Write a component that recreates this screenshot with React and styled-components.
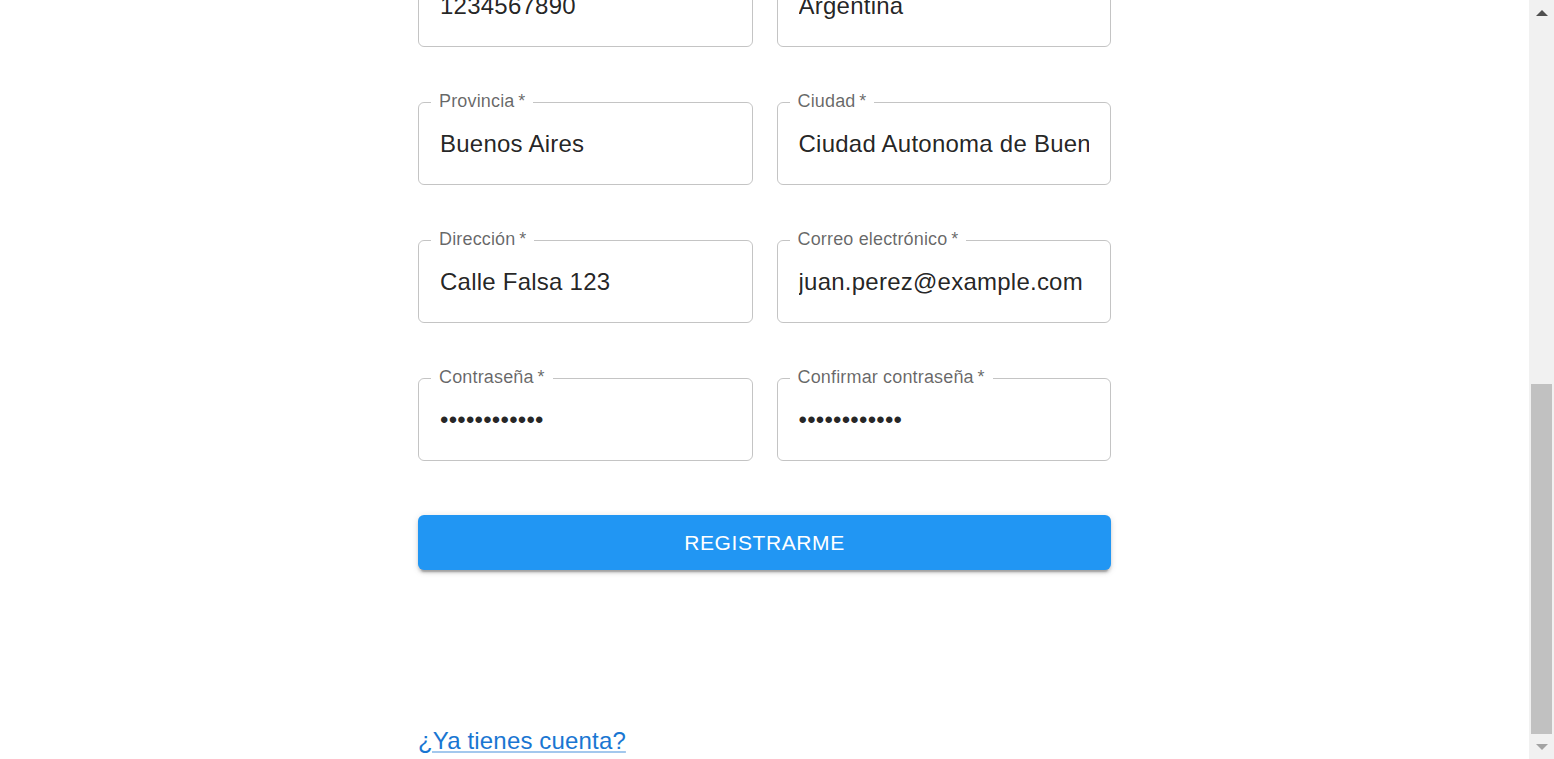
import React from 'react'
import styled, { createGlobalStyle } from 'styled-components'

const GlobalStyle = createGlobalStyle`
  html, body {
    margin: 0;
    padding: 0;
    overflow: hidden;
    background: #fff;
    font-family: "Liberation Sans", Arial, sans-serif;
    letter-spacing: 0.01em;
  }
`

const Viewport = styled.div`
  display: flex;
  height: 100vh;
`

const Page = styled.main`
  flex: 1;
  display: flex;
  flex-direction: column;
  justify-content: flex-end;
  overflow: hidden;
`

const Form = styled.form`
  width: 693px;
  margin: 0 auto;
  display: flex;
  flex-direction: column;
`

const Title = styled.h1`
  margin: 0 0 48px;
  font-size: 36px;
  font-weight: 400;
  text-align: center;
  color: rgba(0, 0, 0, 0.87);
`

const Grid = styled.div`
  display: grid;
  grid-template-columns: 1fr 1fr;
  column-gap: 24px;
  row-gap: 45px;
`

const Field = styled.fieldset`
  margin: 0;
  padding: 0 12px;
  min-width: 0;
  border: 1px solid rgba(0, 0, 0, 0.23);
  border-radius: 6px;
`

const Label = styled.legend`
  padding: 0 8px 2px;
  font-size: 18px;
  line-height: 18px;
  color: rgba(0, 0, 0, 0.6);
`

const Input = styled.input`
  display: block;
  box-sizing: content-box;
  width: calc(100% - 18px);
  height: 35px;
  margin: 0;
  padding: 14px 9px 23px;
  border: 0;
  outline: none;
  background: transparent;
  font-family: inherit;
  font-size: 24px;
  letter-spacing: 0.01em;
  color: rgba(0, 0, 0, 0.87);
`

const SubmitButton = styled.button`
  margin-top: 54px;
  height: 55px;
  border: 0;
  border-radius: 6px;
  background: #2196f3;
  color: #fff;
  font-family: inherit;
  font-size: 21px;
  font-weight: 500;
  letter-spacing: 0.02857em;
  text-transform: uppercase;
  cursor: pointer;
  box-shadow: 0 4.5px 1.5px -3px rgba(0, 0, 0, 0.2),
    0 3px 3px 0 rgba(0, 0, 0, 0.14),
    0 1.5px 7.5px 0 rgba(0, 0, 0, 0.12);
`

const Footer = styled.div`
  margin-top: 153px;
  font-size: 24px;
  line-height: 36px;
`

const LoginLink = styled.a`
  color: #1976d2;
  text-decoration: underline;
  text-decoration-color: rgba(25, 118, 210, 0.4);
`

const Scrollbar = styled.div`
  width: 25px;
  flex-shrink: 0;
  display: flex;
  flex-direction: column;
  background: #f1f1f1;
`

const ScrollButton = styled.div`
  height: 25px;
  display: flex;
  align-items: center;
  justify-content: center;

  &::before {
    content: '';
    border-left: 6px solid transparent;
    border-right: 6px solid transparent;
    ${p => p.$down
      ? 'border-top: 6px solid #a3a3a3;'
      : 'border-bottom: 6px solid #505050;'}
  }
`

const Track = styled.div`
  flex: 1;
  display: flex;
  flex-direction: column;
  justify-content: flex-end;
`

const Thumb = styled.div`
  height: 350px;
  margin: 0 2px;
  background: #c1c1c1;
`

const fields = [
  { label: 'Nombre', value: 'Juan' },
  { label: 'Apellido', value: 'Perez' },
  { label: 'Teléfono', value: '1234567890' },
  { label: 'País', value: 'Argentina' },
  { label: 'Provincia', value: 'Buenos Aires' },
  { label: 'Ciudad', value: 'Ciudad Autonoma de Buenos Aires' },
  { label: 'Dirección', value: 'Calle Falsa 123' },
  { label: 'Correo electrónico', value: 'juan.perez@example.com', type: 'email' },
  { label: 'Contraseña', value: 'contraseña12', type: 'password' },
  { label: 'Confirmar contraseña', value: 'contraseña12', type: 'password' },
]

const App = () => {
  return (
    <>
      <GlobalStyle />
      <Viewport>
        <Page>
          <Form onSubmit={e => e.preventDefault()}>
            <Title>Registro</Title>
            <Grid>
              {fields.map(f => (
                <Field key={f.label}>
                  <Label>{f.label}{'\u2009*'}</Label>
                  <Input type={f.type || 'text'} defaultValue={f.value} readOnly />
                </Field>
              ))}
            </Grid>
            <SubmitButton type="submit">Registrarme</SubmitButton>
            <Footer>
              <LoginLink href="#">¿Ya tienes cuenta?</LoginLink>
            </Footer>
          </Form>
        </Page>
        <Scrollbar>
          <ScrollButton />
          <Track>
            <Thumb />
          </Track>
          <ScrollButton $down />
        </Scrollbar>
      </Viewport>
    </>
  )
}

export default App
